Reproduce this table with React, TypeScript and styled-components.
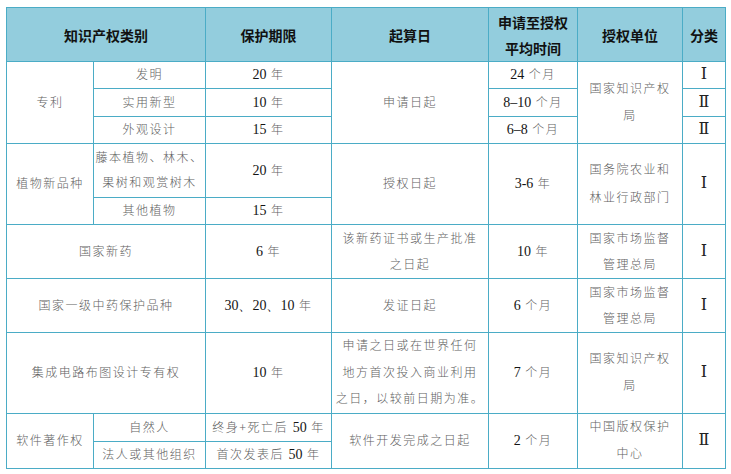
import React from "react";
import styled, { createGlobalStyle } from "styled-components";

const Global = createGlobalStyle`
  html, body { margin: 0; padding: 0; background: #ffffff; }
  body { font-family: "Liberation Serif", "Noto Sans CJK SC", serif; }
`;

const Page = styled.div`
  padding: 7px 0 0 6px;
  width: 731px;
  height: 474px;
  box-sizing: border-box;
  background: #fff;
`;

const Table = styled.table`
  border-collapse: collapse;
  table-layout: fixed;
  width: 719px;
  border: 1px solid #4bacc6;
`;

const HeadRow = styled.tr`
  height: 54px;
  background: #93cddd;
`;

const Row = styled.tr<{ $h: number }>`
  height: ${(p) => p.$h}px;
`;

const Th = styled.th`
  border: 1px solid #4bacc6;
  padding: 0;
  font-family: "Noto Sans CJK SC", sans-serif;
  font-weight: 700;
  font-size: 14px;
  line-height: 26px;
  color: #111;
  text-align: center;
  vertical-align: middle;
`;

const Td = styled.td<{ $lh?: number }>`
  border: 1px solid #4bacc6;
  padding: 0;
  font-family: "Liberation Serif", "Noto Sans CJK SC", serif;
  font-size: 12px;
  font-weight: 300;
  letter-spacing: 1.5px;
  line-height: ${(p) => p.$lh ?? 18}px;
  color: #616161;
  text-align: center;
  vertical-align: middle;
  white-space: nowrap;
`;

const Num = styled.span`
  color: #141414;
  font-family: "Liberation Serif", serif;
  font-size: 14px;
  font-weight: 400;
  letter-spacing: 0;
  line-height: 1;
`;

const Roman = styled.span`
  color: #222;
  font-family: "DejaVu Serif", "Liberation Serif", serif;
  font-size: 16px;
  font-weight: 400;
  letter-spacing: 0;
  line-height: 1;
`;

const Col = styled.col<{ $w: number }>`
  width: ${(p) => p.$w}px;
`;

const widths = [87, 112, 126, 157, 89, 105, 43];

export default function App() {
  return (
    <>
      <Global />
      <Page>
        <Table>
          <colgroup>
            {widths.map((w, i) => (
              <Col key={i} $w={w} />
            ))}
          </colgroup>
          <thead>
            <HeadRow>
              <Th colSpan={2}>知识产权类别</Th>
              <Th>保护期限</Th>
              <Th>起算日</Th>
              <Th>
                申请至授权
                <br />
                平均时间
              </Th>
              <Th>授权单位</Th>
              <Th>分类</Th>
            </HeadRow>
          </thead>
          <tbody>
            <Row $h={27}>
              <Td rowSpan={3}>专利</Td>
              <Td>发明</Td>
              <Td>
                <Num>20</Num> 年
              </Td>
              <Td rowSpan={3}>申请日起</Td>
              <Td>
                <Num>24</Num> 个月
              </Td>
              <Td rowSpan={3} $lh={27}>
                国家知识产权
                <br />
                局
              </Td>
              <Td>
                <Roman>Ⅰ</Roman>
              </Td>
            </Row>
            <Row $h={28}>
              <Td>实用新型</Td>
              <Td>
                <Num>10</Num> 年
              </Td>
              <Td>
                <Num>8–10</Num> 个月
              </Td>
              <Td>
                <Roman>Ⅱ</Roman>
              </Td>
            </Row>
            <Row $h={27}>
              <Td>外观设计</Td>
              <Td>
                <Num>15</Num> 年
              </Td>
              <Td>
                <Num>6–8</Num> 个月
              </Td>
              <Td>
                <Roman>Ⅱ</Roman>
              </Td>
            </Row>
            <Row $h={54}>
              <Td rowSpan={2}>植物新品种</Td>
              <Td $lh={25}>
                藤本植物、林木、
                <br />
                果树和观赏树木
              </Td>
              <Td>
                <Num>20</Num> 年
              </Td>
              <Td rowSpan={2}>授权日起</Td>
              <Td rowSpan={2}>
                <Num>3-6</Num> 年
              </Td>
              <Td rowSpan={2} $lh={28}>
                国务院农业和
                <br />
                林业行政部门
              </Td>
              <Td rowSpan={2}>
                <Roman>Ⅰ</Roman>
              </Td>
            </Row>
            <Row $h={27}>
              <Td>其他植物</Td>
              <Td>
                <Num>15</Num> 年
              </Td>
            </Row>
            <Row $h={54}>
              <Td colSpan={2}>国家新药</Td>
              <Td>
                <Num>6</Num> 年
              </Td>
              <Td $lh={26}>
                该新药证书或生产批准
                <br />
                之日起
              </Td>
              <Td>
                <Num>10</Num> 年
              </Td>
              <Td $lh={26}>
                国家市场监督
                <br />
                管理总局
              </Td>
              <Td>
                <Roman>Ⅰ</Roman>
              </Td>
            </Row>
            <Row $h={54}>
              <Td colSpan={2}>国家一级中药保护品种</Td>
              <Td>
                <Num>30、20、10</Num> 年
              </Td>
              <Td>发证日起</Td>
              <Td>
                <Num>6</Num> 个月
              </Td>
              <Td $lh={26}>
                国家市场监督
                <br />
                管理总局
              </Td>
              <Td>
                <Roman>Ⅰ</Roman>
              </Td>
            </Row>
            <Row $h={81}>
              <Td colSpan={2}>集成电路布图设计专有权</Td>
              <Td>
                <Num>10</Num> 年
              </Td>
              <Td $lh={26.5}>
                申请之日或在世界任何
                <br />
                地方首次投入商业利用
                <br />
                之日，以较前日期为准。
              </Td>
              <Td>
                <Num>7</Num> 个月
              </Td>
              <Td $lh={27}>
                国家知识产权
                <br />
                局
              </Td>
              <Td>
                <Roman>Ⅰ</Roman>
              </Td>
            </Row>
            <Row $h={28}>
              <Td rowSpan={2}>软件著作权</Td>
              <Td>自然人</Td>
              <Td>
                终身+死亡后 <Num>50</Num> 年
              </Td>
              <Td rowSpan={2}>软件开发完成之日起</Td>
              <Td rowSpan={2}>
                <Num>2</Num> 个月
              </Td>
              <Td rowSpan={2} $lh={27}>
                中国版权保护
                <br />
                中心
              </Td>
              <Td rowSpan={2}>
                <Roman>Ⅱ</Roman>
              </Td>
            </Row>
            <Row $h={27}>
              <Td>法人或其他组织</Td>
              <Td>
                首次发表后 <Num>50</Num> 年
              </Td>
            </Row>
          </tbody>
        </Table>
      </Page>
    </>
  );
}
